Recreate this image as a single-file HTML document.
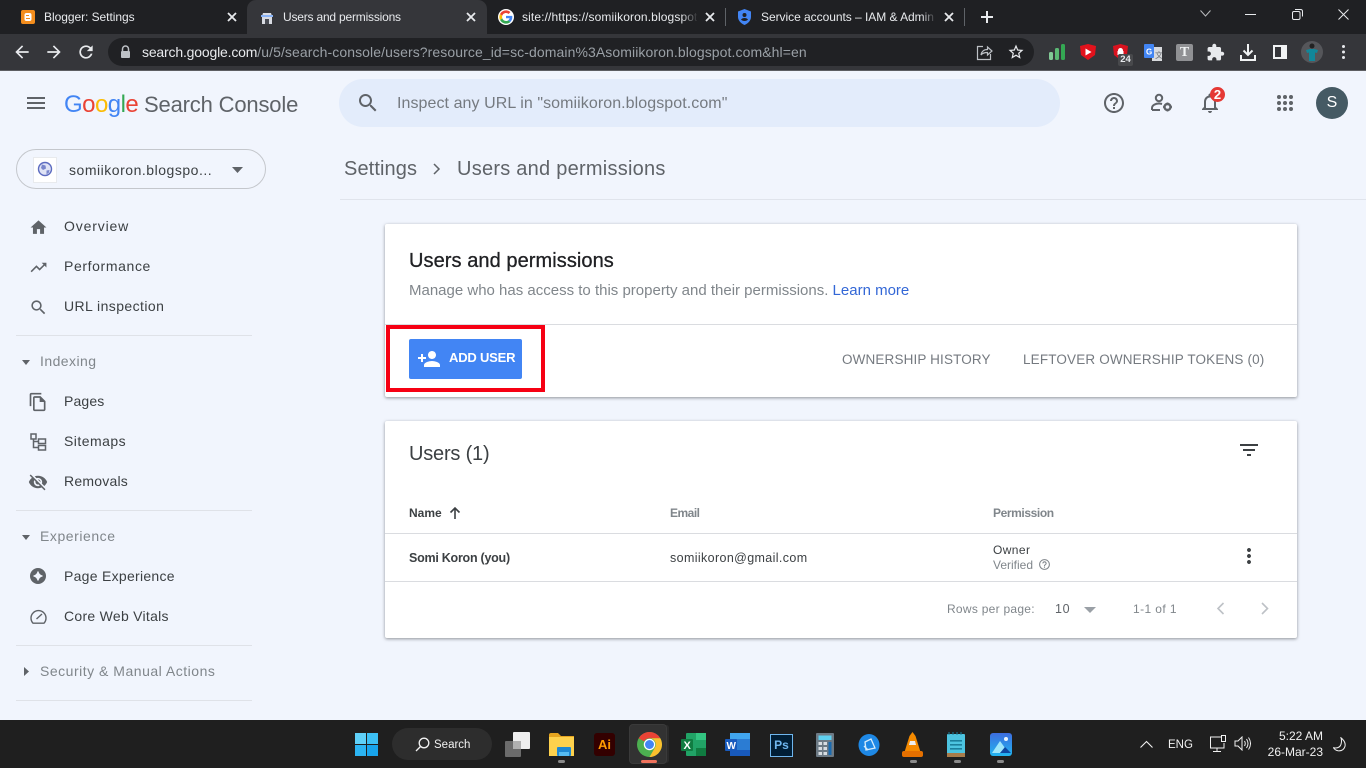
<!DOCTYPE html>
<html lang="en"><head><meta charset="utf-8"><title>Users and permissions</title>
<style>
html,body{margin:0;padding:0}
body{width:1366px;height:768px;overflow:hidden;position:relative;background:#f1f5fd;font-family:"Liberation Sans",sans-serif;color:#3c4043}
.a,.t,svg{position:absolute}
.t{white-space:nowrap;line-height:20px}
.w{color:#e8eaed;font-size:12px;letter-spacing:-.1px}
.n{font-size:14px;color:#3c4043;letter-spacing:.35px}
.h{font-size:14px;color:#80868b;letter-spacing:.45px}
.l{left:16px;width:236px;height:1px;background:#dfe2e8}
.i{fill:#5f6368}
.card{background:#fff;left:385px;width:912px;border-radius:2px;box-shadow:0 1px 3px rgba(60,64,67,.55)}
.x{fill:none;stroke:#e8eaed;stroke-width:1.8}
.dot{width:7px;height:3px;border-radius:2px;background:#8a8a8a;top:760px}
</style></head><body>

<!-- Chrome frame -->
<div class="a" style="left:0;top:0;width:1366px;height:34px;background:#1f2023"></div>
<div class="a" style="left:0;top:34px;width:1366px;height:36px;background:#35363a"></div>
<div class="a" style="left:0;top:70px;width:1366px;height:1px;background:#5d5e62"></div>
<div class="a" style="left:247px;top:0;width:240px;height:34px;background:#35363a;border-radius:9px 9px 0 0"></div>

<svg style="left:21px;top:10px" width="14" height="14"><rect width="14" height="14" rx="2" fill="#f38d1d"/><rect x="3.5" y="3" width="7" height="8" rx="2" fill="#fff"/><rect x="5" y="5" width="3" height="1" fill="#f38d1d"/><rect x="5" y="8" width="4" height="1" fill="#f38d1d"/></svg>
<div class="t w" style="left:44px;top:7px;letter-spacing:-.05px">Blogger: Settings</div>
<svg class="x" style="left:227px;top:12px" width="10" height="10"><path d="M1 1l8 8M9 1l-8 8"/></svg>

<svg style="left:260px;top:11px" width="14" height="14"><path d="M2 5l1-3h8l1 3v8H2z" fill="#d9dce3"/><rect x="1" y="4" width="12" height="2" fill="#8ab4f8"/><rect x="5" y="8" width="4" height="5" fill="#4a4d55"/></svg>
<div class="t w" style="left:283px;top:7px;letter-spacing:-.2px">Users and permissions</div>
<svg class="x" style="left:466px;top:12px" width="10" height="10"><path d="M1 1l8 8M9 1l-8 8"/></svg>

<svg style="left:498px;top:9px" width="16" height="16" viewBox="0 0 48 48"><circle cx="24" cy="24" r="24" fill="#fff"/><path fill="#4285f4" d="M43 24.500c0-1.500-.1-2.600-.4-3.800H24v7.200h10.700c-.4 2.300-2 4.600-4.500 6.200l6.500 5c3.900-3.600 6.300-8.900 6.300-14.600z"/><path fill="#34a853" d="M24 44c5.400 0 10-1.800 13.200-4.900l-6.500-5c-1.700 1.200-4.100 2-6.700 2-5.200 0-9.600-3.500-11.100-8.200l-6.700 5.200C9.500 39.600 16.200 44 24 44z"/><path fill="#fbbc05" d="M12.900 27.900c-.4-1.200-.7-2.500-.7-3.900s.2-2.700.6-3.900l-6.700-5.200C4.700 17.600 4 20.700 4 24s.8 6.400 2.100 9.100z"/><path fill="#ea4335" d="M24 11.900c3 0 5.600 1.100 7.600 3l5.700-5.600C33.900 6.100 29.400 4 24 4 16.200 4 9.500 8.400 6.100 14.900l6.700 5.200c1.500-4.700 5.900-8.200 11.200-8.200z"/></svg>
<div class="t w" style="left:522px;top:7px;width:175px;overflow:hidden;letter-spacing:.12px">site://https://somiikoron.blogspot</div>
<div class="a" style="left:681px;top:6px;width:17px;height:20px;background:linear-gradient(90deg,rgba(31,32,35,0),#1f2023)"></div>
<svg class="x" style="left:705px;top:12px" width="10" height="10"><path d="M1 1l8 8M9 1l-8 8"/></svg>
<div class="a" style="left:725px;top:8px;width:1px;height:18px;background:#5f6368"></div>

<svg style="left:738px;top:9px" width="13" height="16" viewBox="0 0 13 16"><path d="M6.500 0L13 2.500v5.500c0 3.500-3 6.500-6.500 8C3 14.500 0 11.500 0 8V2.500z" fill="#4285f4"/><circle cx="6.500" cy="6" r="2" fill="#1f2023"/><path d="M3 10.500c1.500-2 5.500-2 7 0-1.500 2-5.500 2-7 0z" fill="#1f2023"/></svg>
<div class="t w" style="left:761px;top:7px;width:174px;overflow:hidden;letter-spacing:-.04px">Service accounts – IAM &amp; Admin</div>
<div class="a" style="left:922px;top:6px;width:14px;height:20px;background:linear-gradient(90deg,rgba(31,32,35,0),#1f2023)"></div>
<svg class="x" style="left:944px;top:12px" width="10" height="10"><path d="M1 1l8 8M9 1l-8 8"/></svg>
<div class="a" style="left:964px;top:8px;width:1px;height:18px;background:#5f6368"></div>
<svg style="left:981px;top:11px" width="12" height="12"><path d="M6 0v12M0 6h12" stroke="#e8eaed" stroke-width="2"/></svg>

<svg style="left:1200px;top:10px" width="11" height="7" fill="none" stroke="#b9bbbe"><path d="M.5 .5l5 5.500 5-5.500"/></svg>
<div class="a" style="left:1245px;top:14px;width:11px;height:1px;background:#e8eaed"></div>
<svg style="left:1292px;top:9px" width="11" height="11" fill="none" stroke="#e8eaed"><rect x=".5" y="2.500" width="7.500" height="8" rx="1.500"/><path d="M3 .5h5.500q2 0 2 2v5"/></svg>
<svg style="left:1338px;top:9px" width="11" height="11" fill="none" stroke="#e8eaed"><path d="M.5 .5l10 10M10.500 .5l-10 10"/></svg>

<!-- Toolbar -->
<svg style="left:12px;top:42px" width="20" height="20" viewBox="0 0 24 24" fill="#e8eaed"><path d="M20 11H7.830l5.590-5.590L12 4l-8 8 8 8 1.410-1.410L7.830 13H20z"/></svg>
<svg style="left:44px;top:42px" width="20" height="20" viewBox="0 0 24 24" fill="#e8eaed"><path d="M12 4l-1.410 1.410L16.170 11H4v2h12.170l-5.580 5.590L12 20l8-8z"/></svg>
<svg style="left:76px;top:42px" width="20" height="20" viewBox="0 0 24 24" fill="#e8eaed"><path d="M17.650 6.350A7.960 7.960 0 0 0 12 4a8 8 0 1 0 7.730 10h-2.080A6 6 0 1 1 12 6c1.660 0 3.140.69 4.220 1.780L13 11h7V4z"/></svg>
<div class="a" style="left:108px;top:38px;width:926px;height:28px;border-radius:14px;background:#202124"></div>
<svg style="left:120px;top:45px" width="11" height="14" viewBox="0 0 11 14"><path d="M2.500 6V4a3 3 0 0 1 6 0v2" fill="none" stroke="#bdc1c6" stroke-width="1.500"/><rect x="1" y="6" width="9" height="7" rx="1" fill="#bdc1c6"/></svg>
<div class="t" style="left:142px;top:42px;font-size:14px;color:#9aa0a6;letter-spacing:.09px"><span style="color:#e8eaed;letter-spacing:-.18px">search.google.com</span>/u/5/search-console/users?resource_id=sc-domain%3Asomiikoron.blogspot.com&amp;hl=en</div>
<svg style="left:976px;top:44px" width="17" height="17" viewBox="0 0 17 17" fill="none" stroke="#bdc1c6" stroke-width="1.200"><path d="M7 2.500H1.500v13h13V10"/><path d="M5 11c.5-3.500 3-5.500 6.500-5.500V3l4.500 4-4.500 4V8.500C9 8.500 6.500 9 5 11z"/></svg>
<svg style="left:1007px;top:43px" width="18" height="18" viewBox="0 0 24 24" fill="#e8eaed"><path d="M22 9.240l-7.190-.62L12 2 9.190 8.630 2 9.240l5.460 4.730L5.820 21 12 17.270 18.180 21l-1.630-7.030L22 9.240zM12 15.400l-3.760 2.270 1-4.280-3.320-2.880 4.380-.38L12 6.100l1.710 4.040 4.380.38-3.320 2.880 1 4.280L12 15.400z"/></svg>

<svg style="left:1049px;top:44px" width="16" height="17"><rect x="0" y="8" width="4" height="8" rx="1.500" fill="#81c995"/><rect x="6" y="4" width="4" height="12" rx="1.500" fill="#5bb974"/><rect x="12" y="0" width="4" height="16" rx="1.500" fill="#34a853"/></svg>
<svg style="left:1080px;top:44px" width="16" height="16"><path d="M0 2l8-2 8 2-1 9-7 5-7-5z" fill="#e2121c"/><path d="M5.500 4.500l6 3.500-6 3.500z" fill="#fff"/></svg>
<svg style="left:1113px;top:44px" width="15" height="16"><path d="M0 2l7.500-2L15 2l-1 9-6.500 5L1 11z" fill="#d9131f"/><path d="M5 6.500a2.500 2.500 0 0 1 5 0V7h.5v4h-6V7H5z" fill="#fff"/></svg>
<div class="a" style="left:1118px;top:54px;width:15px;height:12px;background:#48494c;border-radius:2px;color:#e8eaed;font:bold 9.500px/12px 'Liberation Sans',sans-serif;text-align:center">24</div>
<svg style="left:1144px;top:44px" width="18" height="18"><rect x="8" y="3" width="10" height="14" fill="#d8dadd"/><rect x="0" y="0" width="10" height="14" rx="1" fill="#4285f4"/><text x="2" y="10.500" font-size="8" font-weight="bold" fill="#fff" font-family="Liberation Sans">G</text><text x="11" y="14" font-size="8" fill="#6b6f75" font-family="Liberation Sans, Noto Sans CJK SC, sans-serif">文</text></svg>
<div class="a" style="left:1176px;top:44px;width:17px;height:17px;background:#909194;border-radius:2px;color:#f1f3f4;font:bold 14px/17px 'Liberation Serif',serif;text-align:center">T</div>
<svg style="left:1206px;top:43px" width="19" height="19" viewBox="0 0 24 24" fill="#e8eaed"><path d="M20.500 11H19V7c0-1.100-.9-2-2-2h-4V3.500C13 2.120 11.880 1 10.500 1S8 2.120 8 3.500V5H4c-1.100 0-1.990.9-1.990 2v3.800H3.500c1.490 0 2.700 1.210 2.700 2.700s-1.210 2.700-2.700 2.700H2V20c0 1.100.9 2 2 2h3.800v-1.500c0-1.490 1.210-2.700 2.700-2.700 1.490 0 2.700 1.210 2.700 2.700V22H17c1.100 0 2-.9 2-2v-4h1.500c1.380 0 2.500-1.120 2.500-2.500S21.880 11 20.500 11z"/></svg>
<svg style="left:1240px;top:44px" width="16" height="17" fill="none" stroke="#f1f3f4" stroke-width="2"><path d="M8 0v11M3.500 6.500L8 11l4.500-4.500M1 11v5h14v-5"/></svg>
<svg style="left:1273px;top:45px" width="14" height="14"><rect x="1" y="1" width="12" height="12" fill="none" stroke="#f1f3f4" stroke-width="2"/><rect x="8" y="1" width="5" height="12" fill="#f1f3f4"/></svg>
<svg style="left:1301px;top:41px" width="22" height="22"><circle cx="11" cy="11" r="11" fill="#55565a"/><path d="M5 9l4-1h4l4 1-1 3-2-.5V20H8v-8.500L6 12z" fill="#12879a"/><circle cx="11" cy="5" r="2.500" fill="#222"/></svg>
<div class="a" style="left:1342px;top:45px;width:3px;height:3px;border-radius:2px;background:#e8eaed;box-shadow:0 5.500px 0 #e8eaed,0 11px 0 #e8eaed"></div>

<!-- GSC header -->
<svg class="i" style="left:24px;top:91px" width="24" height="24" viewBox="0 0 24 24"><path d="M3 18h18v-2H3v2zm0-5h18v-2H3v2zm0-7v2h18V6H3z"/></svg>
<div class="t" style="left:64px;top:91px;font-size:24px;line-height:28px;letter-spacing:-.55px"><span style="color:#4285f4">G</span><span style="color:#ea4335">o</span><span style="color:#fbbc05">o</span><span style="color:#4285f4">g</span><span style="color:#34a853">l</span><span style="color:#ea4335">e</span></div>
<div class="t" style="left:144px;top:91px;font-size:22px;line-height:28px;color:#5f6368;letter-spacing:-.17px">Search Console</div>
<div class="a" style="left:339px;top:79px;width:721px;height:48px;border-radius:24px;background:#e3ecfb"></div>
<svg class="i" style="left:356px;top:91px" width="24" height="24" viewBox="0 0 24 24"><path d="M15.500 14h-.79l-.28-.27C15.410 12.590 16 11.110 16 9.500 16 5.910 13.090 3 9.500 3S3 5.910 3 9.500 5.910 16 9.500 16c1.610 0 3.090-.59 4.230-1.570l.27.28v.79l5 4.990L20.490 19l-4.990-5zm-6 0C7.010 14 5 11.990 5 9.500S7.010 5 9.500 5 14 7.010 14 9.500 11.990 14 9.500 14z"/></svg>
<div class="t" style="left:397px;top:93.500px;font-size:16px;color:#757a80;letter-spacing:.07px">Inspect any URL in "somiikoron.blogspot.com"</div>
<svg class="i" style="left:1102px;top:91px" width="24" height="24" viewBox="0 0 24 24"><path d="M11 18h2v-2h-2v2zm1-16C6.480 2 2 6.480 2 12s4.480 10 10 10 10-4.480 10-10S17.520 2 12 2zm0 18c-4.410 0-8-3.590-8-8s3.590-8 8-8 8 3.590 8 8-3.590 8-8 8zm0-14c-2.210 0-4 1.790-4 4h2c0-1.100.9-2 2-2s2 .9 2 2c0 2-3 1.750-3 5h2c0-2.250 3-2.500 3-5 0-2.210-1.790-4-4-4z"/></svg>
<svg style="left:1150px;top:92px" width="24" height="22" viewBox="0 0 24 22" fill="none" stroke="#5f6368" stroke-width="2"><circle cx="9" cy="6" r="3.200"/><path d="M2 18v-2c0-3 4-4.500 7-4.500 1 0 2 .2 3 .5M2 18h8"/><circle cx="17.500" cy="15" r="3" stroke-width="2.400"/><path d="M17.500 10.500v1.500M17.500 18v1.500M13 15h1.500M20.500 15H22" stroke-width="1.800"/></svg>
<svg class="i" style="left:1198px;top:91px" width="24" height="24" viewBox="0 0 24 24"><path d="M12 22c1.100 0 2-.9 2-2h-4c0 1.100.9 2 2 2zm6-6v-5c0-3.070-1.630-5.640-4.500-6.320V4c0-.83-.67-1.500-1.500-1.500s-1.500.67-1.500 1.500v.68C7.640 5.360 6 7.920 6 11v5l-2 2v1h16v-1l-2-2zm-2 1H8v-6c0-2.480 1.510-4.500 4-4.500s4 2.020 4 4.500v6z"/></svg>
<div class="a" style="left:1210px;top:87px;width:15px;height:15px;border-radius:50%;background:#e53935;color:#fff;font:bold 13px/15px 'Liberation Sans',sans-serif;text-align:center">2</div>
<svg class="i" style="left:1276px;top:94px" width="18" height="18"><circle cx="3" cy="3" r="2"/><circle cx="9" cy="3" r="2"/><circle cx="15" cy="3" r="2"/><circle cx="3" cy="9" r="2"/><circle cx="9" cy="9" r="2"/><circle cx="15" cy="9" r="2"/><circle cx="3" cy="15" r="2"/><circle cx="9" cy="15" r="2"/><circle cx="15" cy="15" r="2"/></svg>
<div class="a" style="left:1316px;top:87px;width:32px;height:32px;border-radius:50%;background:#455a64;color:#fff;font:16px/32px 'Liberation Sans',sans-serif;text-align:center">S</div>

<!-- Sidebar -->
<div class="a" style="left:16px;top:149px;width:248px;height:38px;border:1px solid #c4c7cc;border-radius:20px"></div>
<div class="a" style="left:33px;top:157px;width:24px;height:26px;background:#fff;border:1px solid #e8eaed;box-sizing:border-box"></div>
<svg style="left:37px;top:161px" width="16" height="16"><circle cx="8" cy="8" r="6.500" fill="#dfe3f5" stroke="#5c6bc0" stroke-width="1.400"/><path d="M5 3.500l3.500 1 .5 3-3 1.500-2-2zM9.500 9.500l3-.5-.5 2.500-2.500 2z" fill="#7986cb"/></svg>
<div class="t" style="left:69px;top:160px;font-size:14px;color:#3c4043;letter-spacing:.52px">somiikoron.blogspo...</div>
<svg style="left:232px;top:167px" width="11" height="6"><path d="M0 0h11L5.500 6z" fill="#5f6368"/></svg>

<svg class="i" style="left:29px;top:218px" width="19" height="19" viewBox="0 0 24 24"><path d="M10 20v-6h4v6h5v-8h3L12 3 2 12h3v8z"/></svg>
<div class="t n" style="left:64px;top:216px;letter-spacing:.85px">Overview</div>
<svg class="i" style="left:29px;top:258px" width="19" height="19" viewBox="0 0 24 24"><path d="M16 6l2.290 2.290-4.880 4.880-4-4L2 16.590 3.410 18l6-6 4 4 6.300-6.290L22 12V6z"/></svg>
<div class="t n" style="left:64px;top:256px;letter-spacing:.62px">Performance</div>
<svg class="i" style="left:29px;top:298px" width="19" height="19" viewBox="0 0 24 24"><path d="M15.500 14h-.79l-.28-.27C15.410 12.590 16 11.110 16 9.500 16 5.910 13.090 3 9.500 3S3 5.910 3 9.500 5.910 16 9.500 16c1.610 0 3.090-.59 4.230-1.570l.27.28v.79l5 4.990L20.490 19l-4.990-5zm-6 0C7.010 14 5 11.990 5 9.500S7.010 5 9.500 5 14 7.010 14 9.500 11.990 14 9.500 14z"/></svg>
<div class="t n" style="left:64px;top:296px;letter-spacing:.42px">URL inspection</div>
<div class="a l" style="top:335px"></div>
<svg style="left:22px;top:360px" width="8" height="5"><path d="M0 0h8L4 5z" fill="#5f6368"/></svg>
<div class="t h" style="left:40px;top:351px">Indexing</div>
<svg class="i" style="left:28px;top:392px" width="20" height="20" viewBox="0 0 24 24"><path d="M16 1H4c-1.100 0-2 .9-2 2v14h2V3h12V1zm-1 4H8c-1.100 0-1.990.9-1.990 2L6 21c0 1.100.89 2 1.990 2H19c1.100 0 2-.9 2-2V11l-6-6zM8 21V7h6v5h5v9H8z"/></svg>
<div class="t n" style="left:64px;top:391px;letter-spacing:.15px">Pages</div>
<svg style="left:30px;top:433px" width="17" height="18" fill="none" stroke="#5f6368" stroke-width="1.500"><rect x="1" y="1" width="5" height="5"/><rect x="8.500" y="6" width="7" height="4.500"/><rect x="8.500" y="12.500" width="7" height="4.500"/><path d="M3.500 6v8.500h5M3.500 8.500h5"/></svg>
<div class="t n" style="left:64px;top:431px;letter-spacing:.47px">Sitemaps</div>
<svg class="i" style="left:28px;top:472px" width="20" height="20" viewBox="0 0 24 24"><path d="M12 7c2.760 0 5 2.240 5 5 0 .65-.13 1.260-.36 1.830l2.920 2.920c1.510-1.260 2.700-2.890 3.430-4.750-1.730-4.390-6-7.500-11-7.500-1.400 0-2.740.25-3.980.7l2.160 2.160C10.740 7.130 11.350 7 12 7zM2 4.270l2.280 2.280.46.46C3.080 8.300 1.780 10.020 1 12c1.730 4.390 6 7.500 11 7.500 1.550 0 3.030-.3 4.380-.84l.42.42L19.730 22 21 20.730 3.270 3 2 4.270zM7.530 9.800l1.550 1.550c-.05.21-.08.43-.08.65 0 1.660 1.340 3 3 3 .22 0 .44-.03.65-.08l1.550 1.550c-.67.33-1.410.53-2.200.53-2.760 0-5-2.240-5-5 0-.79.2-1.530.53-2.200zm4.310-.78l3.150 3.150.02-.16c0-1.660-1.340-3-3-3l-.17.01z"/></svg>
<div class="t n" style="left:64px;top:471px;letter-spacing:.22px">Removals</div>
<div class="a l" style="top:510px"></div>
<svg style="left:22px;top:535px" width="8" height="5"><path d="M0 0h8L4 5z" fill="#5f6368"/></svg>
<div class="t h" style="left:40px;top:526px;letter-spacing:.55px">Experience</div>
<svg style="left:30px;top:568px" width="16" height="16"><circle cx="8" cy="8" r="8" fill="#5f6368"/><path d="M8 3.500Q8.800 7.200 12.500 8 8.800 8.800 8 12.500 7.200 8.800 3.500 8 7.200 7.200 8 3.500z" fill="#f1f5fd" stroke="#f1f5fd"/></svg>
<div class="t n" style="left:64px;top:566px;letter-spacing:.28px">Page Experience</div>
<svg style="left:30px;top:609px" width="17" height="15" fill="none" stroke="#5f6368" stroke-width="1.400"><path d="M3 14.200A7.500 7.500 0 1 1 14 14.200z"/><path d="M6.500 10L12 5"/></svg>
<div class="t n" style="left:64px;top:606px;letter-spacing:.28px">Core Web Vitals</div>
<div class="a l" style="top:645px"></div>
<svg style="left:24px;top:667px" width="5" height="9"><path d="M0 0l5 4.500L0 9z" fill="#5f6368"/></svg>
<div class="t h" style="left:40px;top:661px;letter-spacing:.51px">Security &amp; Manual Actions</div>
<div class="a l" style="top:700px"></div>

<!-- Breadcrumb -->
<div class="t" style="left:344px;top:157px;font-size:20px;line-height:24px;color:#5f6368;letter-spacing:.1px">Settings</div>
<svg style="left:431px;top:162px" width="12" height="14" fill="none" stroke="#5f6368" stroke-width="1.500"><path d="M3 2l5 5-5 5"/></svg>
<div class="t" style="left:457px;top:157px;font-size:20px;line-height:24px;color:#5f6368;letter-spacing:.25px">Users and permissions</div>
<div class="a" style="left:340px;top:199px;width:1026px;height:1px;background:#e0e4ec"></div>

<!-- Card 1 -->
<div class="a card" style="top:224px;height:173px"></div>
<div class="t" style="left:409px;top:250px;font-size:20px;line-height:22px;color:#202124;letter-spacing:.07px;-webkit-text-stroke:.3px #202124">Users and permissions</div>
<div class="t" style="left:409px;top:281px;font-size:15px;color:#80868b">Manage who has access to this property and their permissions. <span style="color:#3367d6">Learn more</span></div>
<div class="a" style="left:385px;top:324px;width:912px;height:1px;background:#dadce0"></div>
<div class="a" style="left:409px;top:339px;width:113px;height:40px;background:#4285f4;border-radius:2px"></div>
<svg style="left:417px;top:347px" width="24" height="24" viewBox="0 0 24 24" fill="#fff"><path d="M15 12c2.210 0 4-1.790 4-4s-1.790-4-4-4-4 1.790-4 4 1.790 4 4 4zm-9-2V7H4v3H1v2h3v3h2v-3h3v-2H6zm9 4c-2.670 0-8 1.340-8 4v2h16v-2c0-2.660-5.330-4-8-4z"/></svg>
<div class="t" style="left:449px;top:348px;font-size:13px;font-weight:bold;color:#fff;letter-spacing:-.2px">ADD USER</div>
<div class="a" style="left:386px;top:325px;width:151px;height:59px;border:4px solid #f60013"></div>
<div class="t" style="left:842px;top:350px;font-size:13.500px;color:#757a80;letter-spacing:.14px">OWNERSHIP HISTORY</div>
<div class="t" style="left:1023px;top:350px;font-size:13.500px;color:#757a80;letter-spacing:.16px">LEFTOVER OWNERSHIP TOKENS (0)</div>

<!-- Card 2 -->
<div class="a card" style="top:421px;height:217px"></div>
<div class="t" style="left:409px;top:442px;font-size:20px;line-height:24px;color:#3c4043;letter-spacing:-.2px">Users (1)</div>
<svg style="left:1237px;top:438px" width="24" height="24" viewBox="0 0 24 24" fill="#3c4043"><path d="M10 18h4v-2h-4v2zM3 6v2h18V6H3zm3 7h12v-2H6v2z"/></svg>
<div class="t" style="left:409px;top:503px;font-size:12px;font-weight:bold;color:#3c4043">Name</div>
<svg style="left:449px;top:506px" width="12" height="13" viewBox="0 0 12 13" fill="none" stroke="#3c4043" stroke-width="1.600"><path d="M6 13V2M1.500 6.500L6 2l4.500 4.500"/></svg>
<div class="t" style="left:670px;top:503px;font-size:12px;font-weight:bold;color:#80868b;letter-spacing:-.5px">Email</div>
<div class="t" style="left:993px;top:503px;font-size:12px;font-weight:bold;color:#80868b;letter-spacing:-.4px">Permission</div>
<div class="a" style="left:385px;top:533px;width:912px;height:1px;background:#dadce0"></div>
<div class="t" style="left:409px;top:548px;font-size:12.500px;font-weight:bold;color:#3c4043;letter-spacing:-.25px">Somi Koron (you)</div>
<div class="t" style="left:670px;top:548px;font-size:12.500px;color:#3c4043;letter-spacing:.37px">somiikoron@gmail.com</div>
<div class="t" style="left:993px;top:540px;font-size:12px;color:#3c4043;letter-spacing:.4px">Owner</div>
<div class="t" style="left:993px;top:555px;font-size:12px;color:#80868b">Verified</div>
<svg style="left:1038px;top:558px;fill:#80868b" width="13" height="13" viewBox="0 0 24 24"><path d="M11 18h2v-2h-2v2zm1-16C6.480 2 2 6.480 2 12s4.480 10 10 10 10-4.480 10-10S17.520 2 12 2zm0 18c-4.410 0-8-3.590-8-8s3.590-8 8-8 8 3.590 8 8-3.590 8-8 8zm0-14c-2.210 0-4 1.790-4 4h2c0-1.100.9-2 2-2s2 .9 2 2c0 2-3 1.750-3 5h2c0-2.250 3-2.500 3-5 0-2.210-1.790-4-4-4z"/></svg>
<svg style="left:1237px;top:544px" width="24" height="24" viewBox="0 0 24 24" fill="#3c4043"><path d="M12 8c1.100 0 2-.9 2-2s-.9-2-2-2-2 .9-2 2 .9 2 2 2zm0 2c-1.100 0-2 .9-2 2s.9 2 2 2 2-.9 2-2-.9-2-2-2zm0 6c-1.100 0-2 .9-2 2s.9 2 2 2 2-.9 2-2-.9-2-2-2z"/></svg>
<div class="a" style="left:385px;top:581px;width:912px;height:1px;background:#dadce0"></div>
<div class="t" style="left:947px;top:599px;font-size:12px;color:#80868b;letter-spacing:.27px">Rows per page:</div>
<div class="t" style="left:1055px;top:599px;font-size:12.500px;color:#5f6368;letter-spacing:.7px">10</div>
<svg style="left:1084px;top:607px" width="12" height="6"><path d="M0 0h12L6 6z" fill="#9aa0a6"/></svg>
<div class="t" style="left:1133px;top:599px;font-size:12px;color:#80868b;letter-spacing:.4px">1-1 of 1</div>
<svg style="left:1216px;top:602px" width="10" height="13" fill="none" stroke="#bdc1c6" stroke-width="1.600"><path d="M7.500 1l-5.500 5.500 5.500 5.500"/></svg>
<svg style="left:1260px;top:602px" width="10" height="13" fill="none" stroke="#bdc1c6" stroke-width="1.600"><path d="M2 1l5.500 5.500L2 12"/></svg>

<!-- Taskbar -->
<div class="a" style="left:0;top:720px;width:1366px;height:48px;background:#1f1f1f"></div>
<svg style="left:355px;top:733px" width="23" height="23"><rect width="11" height="11" fill="#5fd0f8"/><rect x="12" width="11" height="11" fill="#3cc0f5"/><rect y="12" width="11" height="11" fill="#2cb4f2"/><rect x="12" y="12" width="11" height="11" fill="#18a4ec"/></svg>
<div class="a" style="left:392px;top:728px;width:100px;height:32px;border-radius:16px;background:#2d2d2d"></div>
<svg style="left:415px;top:737px" width="15" height="15" fill="none" stroke="#f1f1f1" stroke-width="1.300"><circle cx="9" cy="6" r="4.800"/><path d="M5.500 9.500L1 14"/></svg>
<div class="t" style="left:434px;top:735px;font-size:11.500px;color:#f1f1f1">Search</div>
<svg style="left:505px;top:732px" width="25" height="25"><rect y="9" width="16" height="16" rx="1" fill="#6b6b6b"/><rect x="8" y="0" width="17" height="17" rx="1" fill="#eeeeee"/><rect x="8" y="9" width="8" height="8" fill="#b0b0b0"/></svg>
<svg style="left:549px;top:733px" width="25" height="23"><path d="M0 2q0-2 2-2h7l3 3h13v20H0z" fill="#e5a41f"/><rect y="4" width="25" height="19" fill="#fdd14d"/><rect x="8" y="14" width="14" height="9" rx="1" fill="#1e88d2"/><rect x="10" y="19" width="10" height="4" fill="#56bbf1"/></svg>
<div class="a" style="left:594px;top:733px;width:21px;height:23px;background:#330000;border-radius:3px;color:#ff9a00;font:bold 13px/23px 'Liberation Sans',sans-serif;text-align:center">Ai</div>
<div class="a" style="left:664px;top:725px;width:5px;height:38px;background:#2a2a2a;border-radius:3px"></div>
<div class="a" style="left:629px;top:724px;width:38px;height:40px;background:#323232;border-radius:4px;border:1px solid #3a3a3a;box-sizing:border-box"></div>
<svg style="left:637px;top:732px" width="25" height="25" viewBox="0 0 24 24"><circle cx="12" cy="12" r="12" fill="#4caf50"/><path d="M12 0a12 12 0 0 1 10.400 6H12a6 6 0 0 0-5.200 3L1.600 6A12 12 0 0 1 12 0z" fill="#ea4335"/><path d="M22.400 6A12 12 0 0 1 12 24l5.200-9A6 6 0 0 0 12 6z" fill="#fbc02d"/><circle cx="12" cy="12" r="5.500" fill="#fff"/><circle cx="12" cy="12" r="4.300" fill="#4285f4"/></svg>
<div class="a" style="left:641px;top:760px;width:16px;height:3px;border-radius:2px;background:#f0725c"></div>
<svg style="left:681px;top:733px" width="25" height="23"><rect x="5" width="20" height="23" rx="1" fill="#21a366"/><rect x="15" width="10" height="7" fill="#33c481"/><rect x="15" y="15" width="10" height="8" fill="#107c41"/><rect y="6" width="12" height="12" rx="1" fill="#107c41"/><text x="2.500" y="16" font-size="11" font-weight="bold" fill="#fff" font-family="Liberation Sans">X</text></svg>
<svg style="left:725px;top:733px" width="25" height="23"><rect x="5" width="20" height="23" rx="1" fill="#2b7cd3"/><rect x="5" width="20" height="6" fill="#41a5ee"/><rect x="5" y="17" width="20" height="6" fill="#185abd"/><rect y="6" width="12" height="12" rx="1" fill="#185abd"/><text x="1.500" y="16" font-size="10" font-weight="bold" fill="#fff" font-family="Liberation Sans">W</text></svg>
<div class="a" style="left:770px;top:734px;width:21px;height:21px;background:#001e36;border:1px solid #6fb6ee;color:#6fb6ee;font:bold 12px/21px 'Liberation Sans',sans-serif;text-align:center">Ps</div>
<svg style="left:816px;top:733px" width="18" height="24"><rect width="18" height="24" rx="1" fill="#6d7a85"/><rect x="2.500" y="2.500" width="13" height="4.500" fill="#5ed0f0"/><g fill="#d8dde2"><rect x="2.500" y="9" width="3.500" height="3"/><rect x="7.500" y="9" width="3.500" height="3"/><rect x="2.500" y="14" width="3.500" height="3"/><rect x="7.500" y="14" width="3.500" height="3"/><rect x="2.500" y="19" width="3.500" height="3"/><rect x="7.500" y="19" width="3.500" height="3"/></g><rect x="12.500" y="9" width="3" height="13" fill="#1a6bb0"/></svg>
<svg style="left:858px;top:734px" width="22" height="22"><ellipse cx="11" cy="11" rx="10.500" ry="11" fill="#1e88e5"/><path d="M7 8l6-3 4 9-9 2z" fill="none" stroke="#d6ecfb" stroke-width="1.300"/><path d="M6 12l4 4" stroke="#d6ecfb" stroke-width="1.300"/></svg>
<svg style="left:902px;top:732px" width="21" height="25"><path d="M10.500 0l3 4 5 16H2.500l5-16z" fill="#f58a00"/><path d="M8 9h5l1 4H7z" fill="#eee"/><path d="M0 21q0-2 2-2h17q2 0 2 2v2q0 2-2 2H2q-2 0-2-2z" fill="#e57000"/></svg>
<svg style="left:947px;top:732px" width="18" height="25"><rect y="2" width="18" height="23" rx="1" fill="#4dc4e0"/><rect y="21" width="18" height="4" fill="#a87c4b"/><g fill="#1b7f9c"><rect x="3" y="8" width="12" height="1.600"/><rect x="3" y="12" width="12" height="1.600"/><rect x="3" y="16" width="12" height="1.600"/></g><path d="M2 0v3M6 0v3M10 0v3M14 0v3" stroke="#1b7f9c"/></svg>
<svg style="left:990px;top:733px" width="22" height="23"><defs><linearGradient id="ph" x1="0" y1="0" x2="0" y2="1"><stop offset="0" stop-color="#3d6de0"/><stop offset="1" stop-color="#22b5ef"/></linearGradient></defs><rect width="22" height="23" rx="3" fill="url(#ph)"/><path d="M2 20L10 8l5 7-5 5z" fill="#9fe6fa"/><path d="M10 20l5-6 6 6z" fill="#0d47a1"/><circle cx="16" cy="6" r="2" fill="#eaf6ff"/></svg>
<div class="a dot" style="left:558px"></div><div class="a dot" style="left:910px"></div><div class="a dot" style="left:954px"></div><div class="a dot" style="left:997px"></div>

<svg style="left:1140px;top:740px" width="13" height="9" fill="none" stroke="#f1f1f1" stroke-width="1.100"><path d="M.5 7.500L6.500 1.500l6 6"/></svg>
<div class="t" style="left:1168px;top:735px;font-size:11.500px;color:#f1f1f1">ENG</div>
<svg style="left:1209px;top:735px" width="18" height="18" fill="none" stroke="#f1f1f1"><path d="M12 2H1.500v11H15V8"/><rect x="12.500" y=".5" width="4" height="6"/><path d="M8 13v3M4 16.500h8"/></svg>
<svg style="left:1234px;top:736px" width="17" height="15" fill="none" stroke="#f1f1f1"><path d="M1 5h3l4-4v13l-4-4H1zM10.500 5q1.500 2.500 0 5M12.500 3q3 4.500 0 9M14.500 1.500q4 6 0 12"/></svg>
<div class="t" style="right:43px;top:726px;font-size:12px;color:#f1f1f1;letter-spacing:0">5:22 AM</div>
<div class="t" style="right:43px;top:742px;font-size:12px;color:#f1f1f1;letter-spacing:0">26-Mar-23</div>
<svg style="left:1333px;top:737px" width="14" height="15" fill="none" stroke="#f1f1f1"><path d="M8 .8q5 4 4 8.500-1.500 5-7 4.500-3-.5-4.500-3 6 1 7.500-3.500Q9 4 8 .8z"/></svg>
</body></html>
